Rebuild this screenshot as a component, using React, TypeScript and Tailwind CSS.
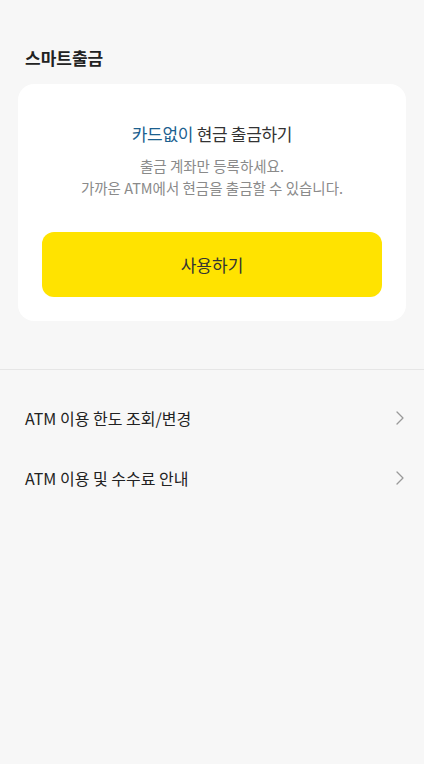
const FONT = { fontFamily: '"Noto Sans CJK KR", "Noto Sans", sans-serif' };

function Chevron() {
  return (
    <svg width="8" height="14" viewBox="0 0 8 14" fill="none" className="shrink-0">
      <path d="M1 1l6 6-6 6" stroke="#9a9a9a" strokeWidth="1.3" strokeLinecap="round" strokeLinejoin="round" />
    </svg>
  );
}

const MENU = ["ATM 이용 한도 조회/변경", "ATM 이용 및 수수료 안내"];

export default function App() {
  return (
    <div className="min-h-[764px] w-[424px] bg-[#f7f7f7] text-[#222]" style={FONT}>
      <div className="px-[25px] pt-[45px] text-[17px] font-bold leading-[26px] text-[#222]">스마트출금</div>

      <div className="mx-[18px] mt-[13px] flex flex-col items-center rounded-[16px] bg-white px-6 pb-[24px] pt-[37px]">
        <div className="text-[17px] leading-[26px] tracking-[-0.3px] text-[#333]">
          <span className="text-[#1b5f8f]">카드없이</span> 현금 출금하기
        </div>
        <p className="mt-[8px] text-center text-[14.5px] leading-[22px] text-[#8a8a8a]">
          출금 계좌만 등록하세요.
          <br />
          가까운 ATM에서 현금을 출금할 수 있습니다.
        </p>
        <button className="mt-[33px] flex h-[65px] w-full items-center justify-center rounded-[12px] bg-[#ffe300] text-[17px] text-[#333]">
          사용하기
        </button>
      </div>

      <div className="mt-[48px] border-t border-[#e6e6e6]">
        <ul className="pt-[18px]">
          {MENU.map((m) => (
            <li key={m} className="flex h-[60px] items-center justify-between pl-[25px] pr-[20px] text-[16px] text-[#222]">
              <span>{m}</span>
              <Chevron />
            </li>
          ))}
        </ul>
      </div>
    </div>
  );
}
